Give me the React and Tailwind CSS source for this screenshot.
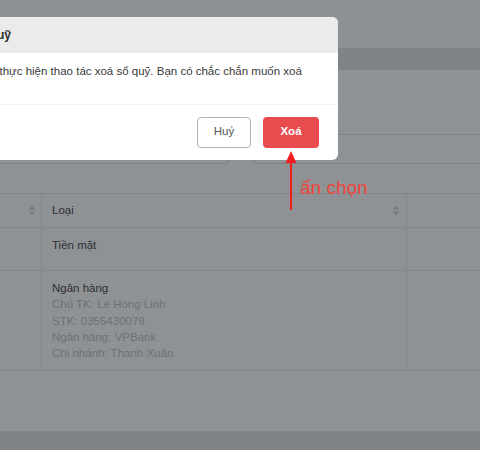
import React from "react";

function SortIcon() {
  return (
    <svg width="8" height="11" viewBox="0 0 8 11" className="shrink-0">
      <path d="M4 0.5 L7.5 4.5 L0.5 4.5 Z" fill="#787b7e" />
      <path d="M4 10.5 L7.5 6.5 L0.5 6.5 Z" fill="#787b7e" />
    </svg>
  );
}

export default function App() {
  return (
    <div
      className="relative w-[480px] h-[450px] overflow-hidden bg-[#8e9194]"
      style={{ fontFamily: '"Liberation Sans", Arial, sans-serif' }}
    >
      {/* page under overlay */}
      <div className="flex flex-col h-full">
        <div className="h-[48px] shrink-0 bg-[#8e9194]" />
        <div className="h-[22px] shrink-0 bg-[#808487]" />
        <div className="flex flex-col bg-[#8f9295] h-[361px] shrink-0 pt-[64px]">
          <div className="flex h-[30px]">
            <div className="ml-[-10px] w-[239px] border border-[#7f8285] rounded-[4px]" />
            <div className="ml-[24px] flex-1 mr-[-10px] border border-[#7f8285] rounded-[4px]" />
          </div>
          <div className="mt-[29px] flex flex-col border-t border-[#84878a] text-[11.5px] text-[#2c2f33]">
            <div className="grid grid-cols-[42px_365px_1fr] h-[34px] border-b border-[#84878a]">
              <div className="flex items-center justify-end pr-[5px] border-r border-[#84878a]">
                <SortIcon />
              </div>
              <div className="flex items-center justify-between pl-[10px] pr-[6px] border-r border-[#84878a]">
                <span>Loại</span>
                <SortIcon />
              </div>
              <div />
            </div>
            <div className="grid grid-cols-[42px_365px_1fr] h-[43px] border-b border-[#84878a]">
              <div className="border-r border-[#84878a]" />
              <div className="pl-[10px] pt-[9px] leading-[16px] border-r border-[#84878a]">Tiền mặt</div>
              <div />
            </div>
            <div className="grid grid-cols-[42px_365px_1fr] h-[100px] border-b border-[#84878a]">
              <div className="border-r border-[#84878a]" />
              <div className="pl-[10px] pt-[9px] leading-[16.3px] border-r border-[#84878a] flex flex-col">
                <span>Ngân hàng</span>
                <span className="text-[#6c7074]">Chủ TK: Le Hong Linh</span>
                <span className="text-[#6c7074]">STK: 0355430079</span>
                <span className="text-[#6c7074]">Ngân hàng: VPBank</span>
                <span className="text-[#6c7074]">Chi nhánh: Thanh Xuân</span>
              </div>
              <div />
            </div>
          </div>
        </div>
        <div className="flex-1 bg-[#7f8386]" />
      </div>

      {/* modal */}
      <div className="absolute left-[-69px] top-[17px] w-[407px] h-[143px] bg-white rounded-[6px] overflow-hidden flex flex-col">
        <div className="h-[36px] shrink-0 bg-[#ebebeb] flex items-center px-[16px] text-[12px] font-bold text-[#2b2b2b]">
          Xoá sổ quỹ
        </div>
        <div className="h-[52px] shrink-0 px-[16px] pt-[8px] text-[11.5px] leading-[20px] text-[#3a3a3a] border-b border-[#f0f0f0]">
          Bạn đang thực hiện thao tác xoá sổ quỹ. Bạn có chắc chắn muốn xoá không?
        </div>
        <div className="flex-1 flex items-center justify-end gap-[12px] pr-[19px] pb-[1px]">
          <button className="w-[54px] h-[31px] border border-[#b3b3b3] rounded-[4px] bg-white text-[11.5px] text-[#555]">
            Huỷ
          </button>
          <button className="w-[56px] h-[31px] rounded-[4px] bg-[#e84c4f] text-[11.5px] font-bold text-white">
            Xoá
          </button>
        </div>
      </div>

      {/* annotation arrow */}
      <svg className="absolute left-[284px] top-[150px]" width="16" height="62" viewBox="0 0 16 62">
        <path d="M7 1 L12.5 13 L1.5 13 Z" fill="#f21d1d" />
        <rect x="6" y="12" width="2" height="48" fill="#f21d1d" />
      </svg>
      <div className="absolute left-[300px] top-[176px] text-[19px] leading-[24px] text-[#f0443a]">
        ấn chọn
      </div>
    </div>
  );
}
